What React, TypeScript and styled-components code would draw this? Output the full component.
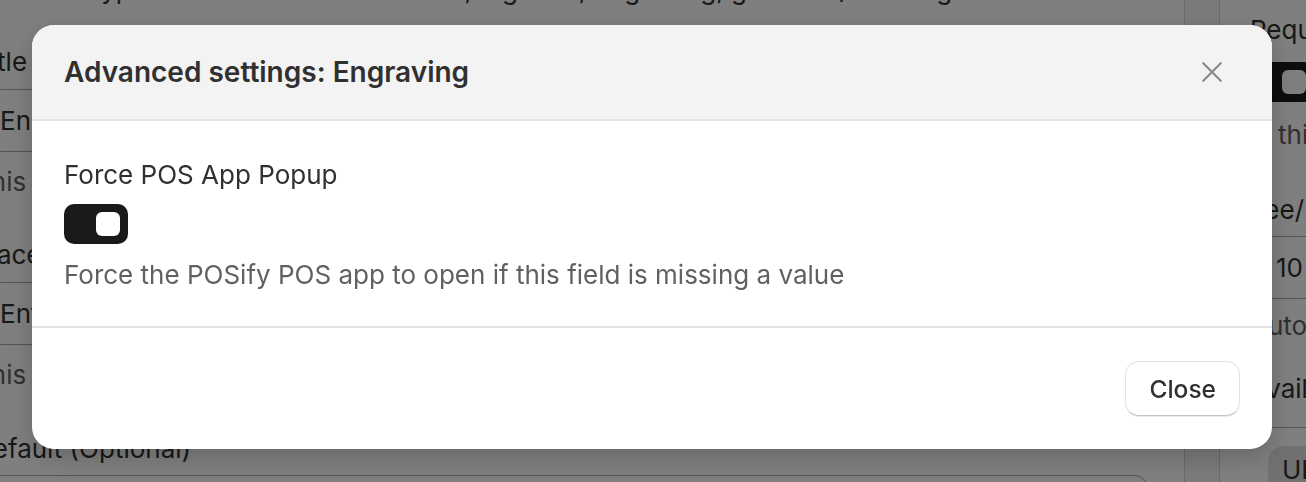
import React from 'react';
import styled, { createGlobalStyle } from 'styled-components';

const GlobalStyle = createGlobalStyle`
	html, body {
		margin: 0;
		padding: 0;
		overflow: hidden;
	}
	body {
		font-family: Inter, 'Noto Sans', 'Liberation Sans', sans-serif;
		color: #303030;
		-webkit-font-smoothing: antialiased;
	}
`;

const App: React.FC = () => {
	return (
		<>
			<GlobalStyle />
			<Page>
				<Main>
					<TopHint>Type of the customisation field, e.g. text, engraving, gift note / message</TopHint>
					<FieldLabel $gap={40}>Title</FieldLabel>
					<Input>Engraving</Input>
					<Hint>This is shown to staff on the POS</Hint>
					<FieldLabel $gap={41}>Placeholder</FieldLabel>
					<Input>Enter engraving text</Input>
					<Hint>This is shown inside the empty field</Hint>
					<FieldLabel $gap={42}>Default (Optional)</FieldLabel>
					<Input $gap={10} />
				</Main>
				<Gutter />
				<Side>
					<FieldLabel $gap={14}>Required</FieldLabel>
					<SideToggle>
						<Knob />
					</SideToggle>
					<Hint $gap={17}>Is this field required</Hint>
					<FieldLabel $gap={43}>Fee/Price</FieldLabel>
					<Input $gap={10} $side>
						10
					</Input>
					<Hint $gap={11}>Automatically added</Hint>
					<FieldLabel $gap={31}>Available in</FieldLabel>
					<Divider />
					<Chip>UK</Chip>
				</Side>
			</Page>

			<Overlay>
				<Modal>
					<Header>
						<Title>Advanced settings: Engraving</Title>
						<IconButton aria-label='Close'>
							<svg width='24' height='24' viewBox='0 0 24 24' fill='none'>
								<path
									d='M2.5 2.5L21.5 21.5M21.5 2.5L2.5 21.5'
									stroke='#8a8a8a'
									strokeWidth='2.4'
									strokeLinecap='round'
								/>
							</svg>
						</IconButton>
					</Header>
					<Body>
						<Label>Force POS App Popup</Label>
						<Toggle $on>
							<Knob />
						</Toggle>
						<Help>Force the POSify POS app to open if this field is missing a value</Help>
					</Body>
					<Footer>
						<Button>Close</Button>
					</Footer>
				</Modal>
			</Overlay>
		</>
	);
};

const Page = styled.div`
	width: 1306px;
	height: 482px;
	overflow: hidden;
	display: flex;
	background: #fff;
	font-size: 26px;
`;

const Main = styled.div`
	width: 1211px;
	margin-left: -26px;
	padding-right: 36px;
	box-sizing: border-box;
	display: flex;
	flex-direction: column;
	border-right: 1px solid #d0d0d0;
	flex-shrink: 0;
`;

const Gutter = styled.div`
	width: 34px;
	flex-shrink: 0;
	border-right: 1px solid #d0d0d0;
	background: #f7f7f7;
`;

const Side = styled.div`
	flex: 1;
	padding-left: 30px;
	display: flex;
	flex-direction: column;
	min-width: 0;
	white-space: nowrap;
`;

const TopHint = styled.div`
	margin-top: -26px;
	margin-left: 112px;
	line-height: 32px;
	white-space: nowrap;
	color: #303030;
`;

const FieldLabel = styled.div<{ $gap?: number }>`
	margin-top: ${(p) => p.$gap ?? 0}px;
	line-height: 32px;
	white-space: nowrap;
	color: #303030;
`;

const Input = styled.div<{ $gap?: number; $side?: boolean }>`
	margin-top: ${(p) => p.$gap ?? 11}px;
	height: 63px;
	flex-shrink: 0;
	line-height: 61px;
	border-top: 1px solid #a8a8a8;
	border-bottom: 1px solid #a8a8a8;
	border-right: ${(p) => (p.$side ? 'none' : '1px solid #a8a8a8')};
	border-radius: ${(p) => (p.$side ? '0' : '0 14px 14px 0')};
	white-space: nowrap;
	box-sizing: border-box;
	padding-left: ${(p) => (p.$side ? '56px' : '26px')};
	margin-left: ${(p) => (p.$side ? '-30px' : '0')};
	color: #303030;
`;

const Hint = styled.div<{ $gap?: number }>`
	margin-top: ${(p) => p.$gap ?? 14}px;
	line-height: 32px;
	color: #616161;
	white-space: nowrap;
`;

const Divider = styled.div`
	margin-top: 22px;
	margin-left: -30px;
	border-top: 1px solid #a8a8a8;
`;

const SideToggle = styled.div`
	margin-top: 16px;
	width: 64px;
	height: 40px;
	flex-shrink: 0;
	box-sizing: border-box;
	border-radius: 10px;
	background: #1a1a1a;
	display: flex;
	align-items: center;
	justify-content: flex-end;
	padding: 0 8px;
`;

const Chip = styled.div`
	margin-top: 18px;
	align-self: flex-start;
	padding: 4px 14px;
	margin-left: 18px;
	border-radius: 16px;
	background: #e3e3e3;
	line-height: 40px;
`;

const Overlay = styled.div`
	position: fixed;
	inset: 0;
	background: rgba(0, 0, 0, 0.5);
	display: flex;
	align-items: flex-start;
	padding: 25px 0 0 32px;
	box-sizing: border-box;
`;

const Modal = styled.div`
	width: 1240px;
	height: 424px;
	background: #fff;
	border-radius: 22px;
	overflow: hidden;
	display: flex;
	flex-direction: column;
	box-shadow: 0 8px 24px rgba(0, 0, 0, 0.2);
`;

const Header = styled.div`
	height: 96px;
	flex-shrink: 0;
	box-sizing: border-box;
	background: #f3f3f3;
	border-bottom: 2px solid #e3e3e3;
	display: flex;
	align-items: center;
	justify-content: space-between;
	padding: 0 44px 0 32px;
`;

const Title = styled.h2`
	margin: 0;
	font-size: 28px;
	font-weight: 600;
	color: #303030;
`;

const IconButton = styled.button`
	width: 32px;
	height: 32px;
	padding: 0;
	border: none;
	background: transparent;
	display: flex;
	align-items: center;
	justify-content: center;
	cursor: pointer;
	& svg {
		width: 22px;
		height: 22px;
	}
`;

const Body = styled.div`
	height: 207px;
	flex-shrink: 0;
	box-sizing: border-box;
	border-bottom: 2px solid #e3e3e3;
	padding: 38px 32px 0;
	display: flex;
	flex-direction: column;
	align-items: flex-start;
`;

const Label = styled.div`
	font-size: 26px;
	line-height: 32px;
	color: #303030;
`;

const Toggle = styled.div<{ $on?: boolean }>`
	margin-top: 13px;
	width: 64px;
	height: 40px;
	box-sizing: border-box;
	border-radius: 10px;
	background: ${(p) => (p.$on ? '#1a1a1a' : '#c4c4c4')};
	display: flex;
	align-items: center;
	justify-content: ${(p) => (p.$on ? 'flex-end' : 'flex-start')};
	padding: 0 8px;
`;

const Knob = styled.div`
	width: 24px;
	height: 24px;
	border-radius: 6px;
	background: #fff;
`;

const Help = styled.div`
	margin-top: 15px;
	font-size: 26px;
	line-height: 32px;
	color: #616161;
`;

const Footer = styled.div`
	flex: 1;
	display: flex;
	align-items: center;
	justify-content: flex-end;
	padding: 0 32px;
`;

const Button = styled.button`
	height: 55px;
	padding: 0 23px;
	font-family: inherit;
	font-size: 24.5px;
	font-weight: 550;
	color: #303030;
	background: #fff;
	border: 1.5px solid #e3e3e3;
	border-bottom-color: #c4c4c4;
	border-radius: 14px;
	box-shadow: 0 1px 0 rgba(0, 0, 0, 0.08);
	cursor: pointer;
`;

export default App;
